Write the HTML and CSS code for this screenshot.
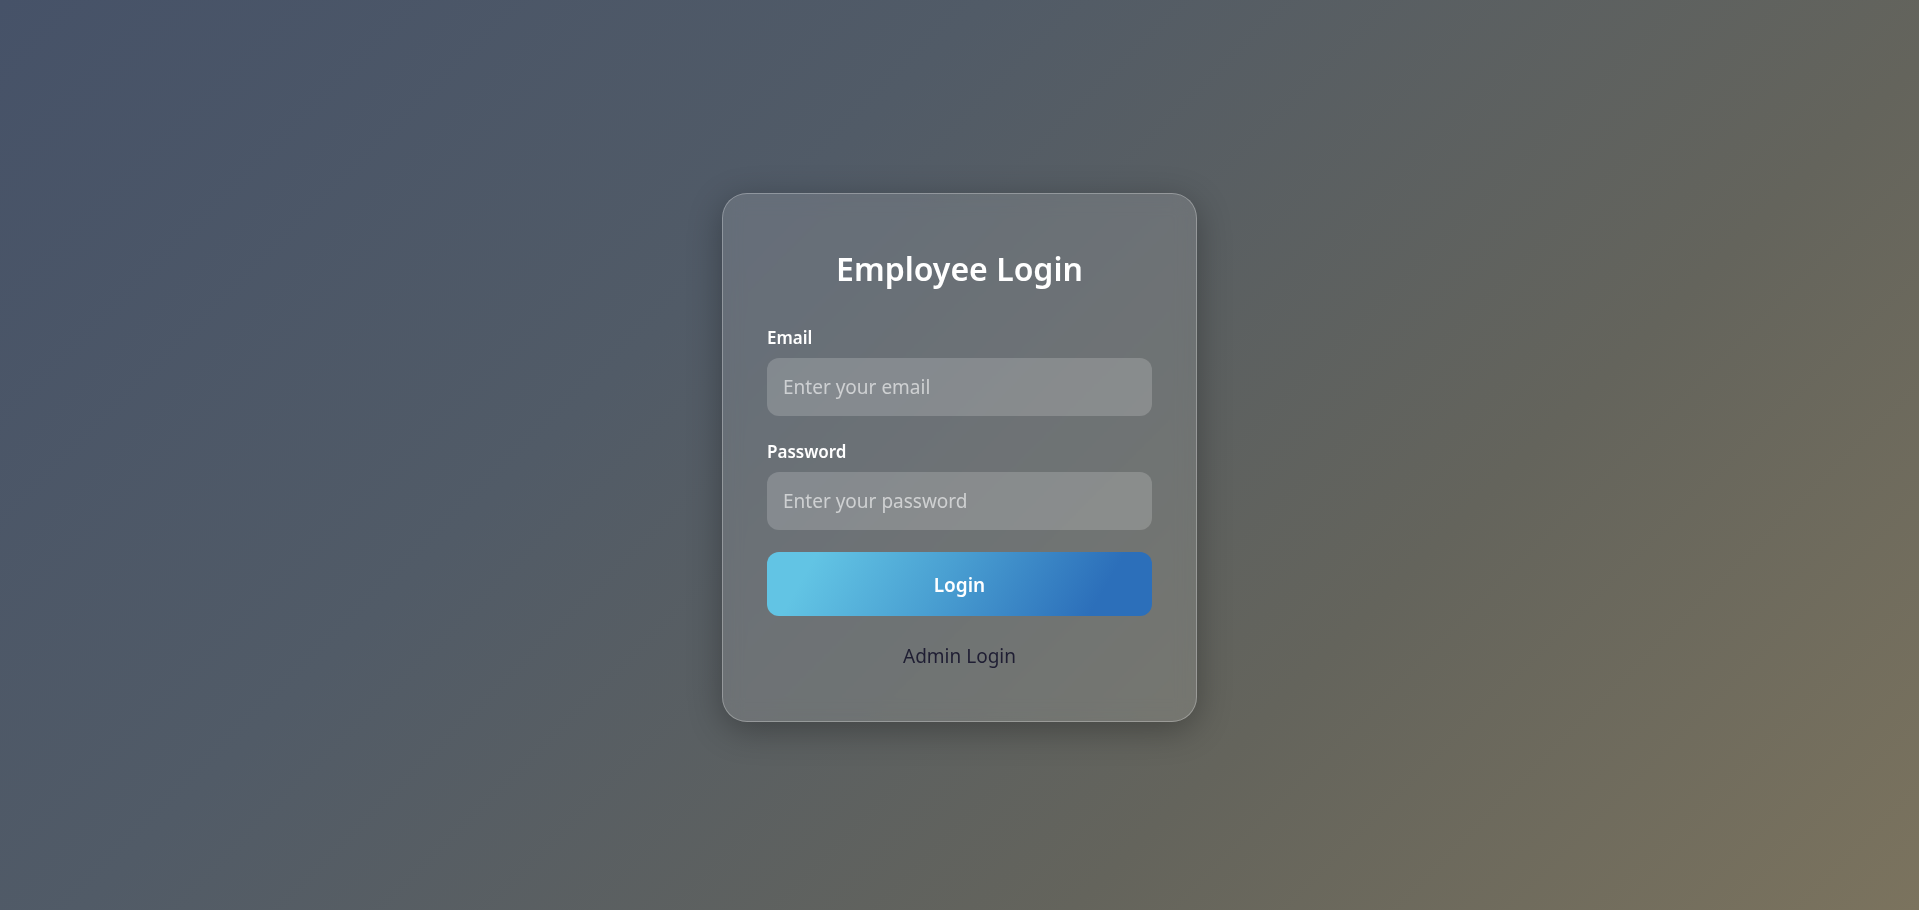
FILE: index.html
```html
<!DOCTYPE html>
<html lang="en">
<head>
<meta charset="utf-8">
<title>Employee Login</title>
<link rel="stylesheet" href="styles.css">
</head>
<body>
<main class="page">
  <form class="card">
    <h1 class="title">Employee Login</h1>
    <div class="field">
      <label class="label" for="email">Email</label>
      <input class="input" id="email" type="email" placeholder="Enter your email">
    </div>
    <div class="field">
      <label class="label" for="password">Password</label>
      <input class="input" id="password" type="password" placeholder="Enter your password">
    </div>
    <button class="btn" type="button">Login</button>
    <a class="admin" href="#">Admin Login</a>
  </form>
</main>
</body>
</html>
```
FILE: styles.css
```css
* { box-sizing: border-box; }
html, body { margin: 0; height: 100%; }
body {
  font-family: "Noto Sans", "Open Sans", sans-serif;
  background: linear-gradient(135deg, #465268 0%, #515b67 35%, #64645c 70%, #7b735e 100%);
  background-attachment: fixed;
}
.page {
  min-height: 100vh;
  display: flex;
  align-items: center;
  justify-content: center;
  padding-top: 5px;
}
.card {
  width: 475px;
  padding: 55px 44px 52px;
  border-radius: 25px;
  border: 1px solid rgba(255, 255, 255, 0.28);
  background: rgba(255, 255, 255, 0.12);
  backdrop-filter: blur(10px);
  box-shadow: 0 8px 34px rgba(0, 0, 0, 0.3);
  display: flex;
  flex-direction: column;
}
.title {
  margin: 0 0 38px;
  font-size: 32px;
  line-height: 40px;
  font-weight: 600;
  color: #ffffff;
  text-align: center;
}
.field { display: flex; flex-direction: column; }
.field + .field { margin-top: 25px; }
.label {
  font-size: 17px;
  line-height: 22px;
  font-weight: 600;
  color: #ffffff;
  margin-bottom: 9px;
}
.input {
  height: 58px;
  border: none;
  outline: none;
  border-radius: 12px;
  padding: 0 16px;
  font-family: inherit;
  font-size: 19px;
  color: #ffffff;
  background: rgba(255, 255, 255, 0.18);
}
.input::placeholder { color: rgba(255, 255, 255, 0.6); }
.btn {
  margin-top: 22px;
  height: 64px;
  padding-top: 3px;
  border: none;
  border-radius: 12px;
  font-family: inherit;
  font-size: 19px;
  font-weight: 600;
  color: #ffffff;
  background: linear-gradient(120deg, #62c4e4 12%, #4aa0d2 45%, #2c6fba 85%);
  cursor: pointer;
}
.admin {
  margin-top: 27px;
  align-self: center;
  font-size: 19px;
  line-height: 26px;
  color: #1f1e33;
  text-decoration: none;
}
```
